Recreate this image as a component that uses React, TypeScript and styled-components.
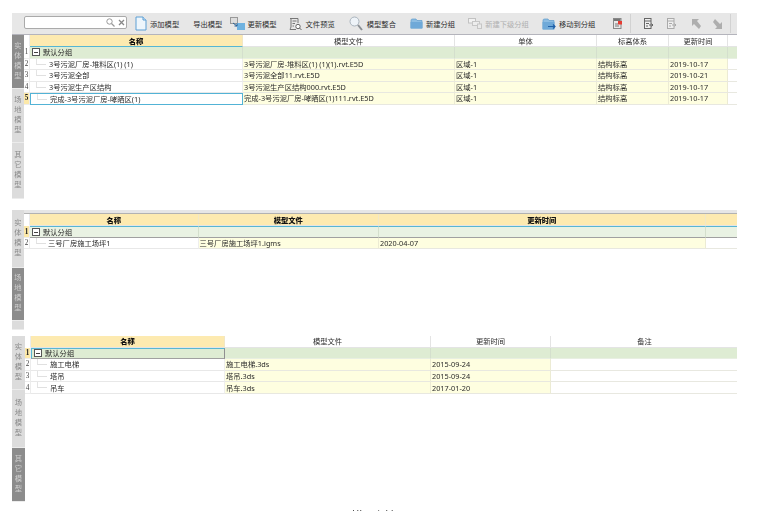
import React from "react";
import styled, { createGlobalStyle } from "styled-components";

const Global = createGlobalStyle`
  html, body { margin: 0; padding: 0; background: #fff; overflow: hidden; }
  #root { width: 784px; height: 511px; overflow: hidden; }
`;

const Page = styled.div`
  width: 784px;
  height: 511px;
  overflow: hidden;
  padding: 13px 47px 0 12px;
  box-sizing: border-box;
  font-family: "Noto Sans", "Noto Sans CJK SC", sans-serif;
  font-size: 7.3px;
  color: #2a2a2a;
  filter: blur(0.3px);
`;

const Toolbar = styled.div`
  height: 21px;
  box-sizing: content-box;
  border-bottom: 1px solid #b4b4bc;
  background: #e7e7e7;
  display: flex;
  align-items: center;
`;

const SearchBox = styled.div`
  margin: 0 0 2px 12px;
  width: 103px;
  height: 13px;
  box-sizing: border-box;
  background: #fff;
  border: 1px solid #aaa;
  border-radius: 2px;
  display: flex;
  align-items: center;
  justify-content: flex-end;
  gap: 3px;
  padding-right: 1px;
`;

const Tool = styled.div<{ $ml: number; $gap?: number; $off?: boolean }>`
  display: flex;
  align-items: center;
  flex: none;
  margin-left: ${(p) => p.$ml}px;
  gap: ${(p) => p.$gap ?? 3}px;
  color: ${(p) => (p.$off ? "#b0b0b0" : "#2e2e2e")};
  white-space: nowrap;
  line-height: 12px;
`;

const ToolSep = styled.div<{ $ml: number }>`
  flex: none;
  width: 1px;
  height: 19px;
  margin-left: ${(p) => p.$ml}px;
  background: #d2d2d2;
`;

const Panel = styled.div<{ $height: number; $mt: number }>`
  display: flex;
  height: ${(p) => p.$height}px;
  margin-top: ${(p) => p.$mt}px;
  overflow: hidden;
`;

const Rail = styled.div<{ $w: number }>`
  flex: none;
  width: ${(p) => p.$w}px;
  display: flex;
  flex-direction: column;
  background: #dcdcdc;
`;

const RailTab = styled.div<{ $h: number; $on?: boolean }>`
  flex: none;
  height: ${(p) => p.$h}px;
  box-sizing: border-box;
  display: flex;
  align-items: center;
  justify-content: center;
  background: ${(p) => (p.$on ? "#8c8c8c" : "#dcdcdc")};
  color: ${(p) => (p.$on ? "#cfcfcf" : "#8a8a8a")};
  border-bottom: 1px solid #ececec;
  writing-mode: vertical-rl;
  letter-spacing: 2.6px;
  line-height: 12px;
`;

const Body = styled.div`
  flex: 1;
  min-width: 0;
  display: flex;
  flex-direction: column;
`;

const TopStrip = styled.div`
  flex: none;
  height: 3px;
  background: #e6e6e6;
  border-bottom: 1px solid #b2b2b2;
`;

const Row = styled.div<{ $cols: string; $h: number }>`
  flex: none;
  display: grid;
  grid-template-columns: ${(p) => p.$cols};
  height: ${(p) => p.$h}px;
  > *:last-child {
    border-right: 0;
  }
`;

const NumCell = styled.div<{ $on?: boolean; $head?: boolean }>`
  box-sizing: border-box;
  display: flex;
  align-items: center;
  justify-content: center;
  font-size: 7.2px;
  font-family: "Liberation Serif", serif;
  font-weight: ${(p) => (p.$on ? 700 : 400)};
  color: ${(p) => (p.$on ? "#222" : "#444")};
  background: ${(p) => (p.$on ? "#fde9a9" : "#fff")};
  border-bottom: 1px solid ${(p) => (p.$head ? "#fff" : "#ececec")};
  border-right: 1px solid #ececec;
`;

const HeadCell = styled.div<{ $on?: boolean; $line?: boolean }>`
  box-sizing: border-box;
  display: flex;
  align-items: center;
  justify-content: center;
  background: ${(p) => (p.$on ? "#fdeab0" : "#fff")};
  border-right: 1px solid ${(p) => (p.$on ? "#f1e7c6" : "#e4e4e4")};
  border-bottom: ${(p) => (p.$line ? "1.5px solid #57b6d3" : "1px solid #e4e4e4")};
  font-weight: ${(p) => (p.$on ? 900 : 400)};
  color: ${(p) => (p.$on ? "#111" : "#2e2e2e")};
  white-space: nowrap;
`;

const GroupCell = styled.div<{ $tone: string; $first?: boolean; $sel?: string }>`
  box-sizing: border-box;
  display: flex;
  align-items: center;
  gap: 3px;
  padding-left: ${(p) => (p.$first ? 2 : 0)}px;
  background: ${(p) => p.$tone};
  white-space: nowrap;
  overflow: hidden;
  border-right: 1px solid ${(p) => (p.$sel === "cell" ? "#909090" : "#d4dfcd")};
  border-top: ${(p) => (p.$sel ? "1px solid #57b6d3" : "0")};
  border-bottom: ${(p) => (p.$sel ? "1px solid #a0a0a0" : "1px solid #e8efe2")};
  border-left: ${(p) => (p.$sel === "cell" ? "1px solid #57b6d3" : "0")};
`;

const Collapse = styled.span`
  flex: none;
  width: 8px;
  height: 8px;
  box-sizing: border-box;
  border: 1px solid #555;
  background: #fff;
  display: flex;
  align-items: center;
  justify-content: center;
  &::before {
    content: "";
    width: 4px;
    height: 1px;
    background: #444;
  }
`;

const NameCell = styled.div<{ $sel?: boolean; $pad: number }>`
  position: relative;
  box-sizing: border-box;
  display: flex;
  align-items: center;
  padding-left: ${(p) => p.$pad}px;
  white-space: nowrap;
  overflow: hidden;
  background: #fff;
  border: ${(p) => (p.$sel ? "1px solid #52b3d6" : "0")};
  border-bottom: 1px solid ${(p) => (p.$sel ? "#52b3d6" : "#e8e8e8")};
  border-right: 1px solid ${(p) => (p.$sel ? "#52b3d6" : "#eeeeee")};
  &::before {
    content: "";
    position: absolute;
    left: 6px;
    top: -1px;
    width: 9px;
    height: 6px;
    border-left: 1px solid #e4e4e4;
    border-bottom: 1px solid #e0e0e0;
  }
`;

const DataCell = styled.div<{ $plain?: boolean }>`
  box-sizing: border-box;
  display: flex;
  align-items: center;
  padding-left: 1px;
  white-space: nowrap;
  overflow: hidden;
  background: ${(p) => (p.$plain ? "#fff" : "#fefee0")};
  border-right: 1px solid #ecebd4;
  border-bottom: 1px solid #e8e8e0;
`;

const Caption = styled.div`
  margin: 6px 0 0 287px;
  font-family: "Noto Sans CJK SC", sans-serif;
  font-size: 13px;
  letter-spacing: 3.7px;
  line-height: 16px;
  color: #444;
  white-space: nowrap;
`;

const I = (p: { w: number; h: number; children: React.ReactNode }) => (
  <svg width={p.w} height={p.h} viewBox={`0 0 ${p.w} ${p.h}`} style={{ flex: "none", display: "block" }}>
    {p.children}
  </svg>
);

const DocIcon = () => (
  <I w={12} h={15}>
    <path d="M1 1H8L11 4V14H1Z" fill="#eef6fc" stroke="#5c9fd4" />
    <path d="M8 1V4H11" fill="#cfe4f5" stroke="#5c9fd4" />
  </I>
);
const UpdateIcon = () => (
  <I w={15} h={14}>
    <rect x="0.5" y="0.5" width="7" height="6" fill="#ddd" stroke="#999" />
    <rect x="7" y="6" width="8" height="7" fill="#6fb2e0" />
    <path d="M3 6L7 9M7 9V6.5M7 9H4.5" stroke="#245f96" fill="none" />
  </I>
);
const PreviewIcon = () => (
  <I w={13} h={14}>
    <path d="M1 1.5H9M2 1.5V10C2 11 1 11.5 1 12.5H7M9 1.5V6M3.5 4H7.5M3.5 6.5H6M3.5 9H5" stroke="#777" fill="none" />
    <circle cx="9" cy="9.5" r="2.2" fill="#fff" stroke="#666" />
    <path d="M10.5 11L12.5 13" stroke="#666" />
  </I>
);
const SearchIcon = () => (
  <I w={14} h={15}>
    <circle cx="5.5" cy="5.5" r="4.5" fill="#eef3f8" stroke="#aab4bd" />
    <path d="M9 9L13 14" stroke="#8a8f94" strokeWidth="2" />
  </I>
);
const FolderIcon = () => (
  <I w={13} h={11}>
    <path d="M1 2.5C1 1.5 1.5 1 2.5 1H6L7 2.5H12V10H1Z" fill="#8dbde2" stroke="#5f9bcb" strokeWidth="0.7" />
    <rect x="0.5" y="4" width="12" height="6.5" fill="#6fa9d8" />
  </I>
);
const SubGroupIcon = () => (
  <I w={14} h={11}>
    <rect x="0.5" y="0.5" width="7" height="4.5" fill="#f2f2f2" stroke="#c2c2c2" />
    <rect x="4.5" y="3.5" width="7" height="4" fill="#ededed" stroke="#c6c6c6" />
    <rect x="9.5" y="6" width="4" height="4.5" fill="#eaeaea" stroke="#c6c6c6" />
  </I>
);
const MoveIcon = () => (
  <I w={14} h={12}>
    <path d="M1 2.5C1 1.5 1.5 1 2.5 1H6L7 2.5H12V11H1Z" fill="#8dbde2" stroke="#5f9bcb" strokeWidth="0.7" />
    <rect x="0.5" y="4" width="12" height="7.5" fill="#6fa9d8" />
    <path d="M6 8.5H13M11 6.5L13 8.5L11 10.5" stroke="#1f5fa8" fill="none" strokeWidth="1.2" />
  </I>
);
const RedDocIcon = () => (
  <I w={9} h={11}>
    <rect x="0.5" y="0.5" width="7.5" height="10" fill="#e8e8e8" stroke="#888" />
    <rect x="1" y="1" width="6.5" height="2" fill="#777" />
    <rect x="5" y="3" width="4" height="3.5" fill="#e53b32" />
    <path d="M2 6H5M2 8H6" stroke="#777" />
  </I>
);
const SheetIcon = ({ c }: { c: string }) => (
  <I w={9} h={11}>
    <rect x="0.5" y="0.5" width="6.5" height="10" fill="#efefef" stroke={c} />
    <path d="M1 3H7M2 5.5H5M2 8H4" stroke={c} />
    <path d="M5 7H9M7.5 5.5L9 7L7.5 8.5" stroke={c} fill="none" />
  </I>
);
const ArrowIcon = ({ flip }: { flip?: boolean }) => (
  <I w={10} h={10}>
    <path
      d={flip ? "M2 0L7 5L9 3V10H2L4 8L0 3Z" : "M8 10L3 5L1 7V0H8L6 2L10 7Z"}
      fill="#aeaeae"
    />
  </I>
);
const Lens = () => (
  <I w={9} h={9}>
    <circle cx="3.5" cy="3.5" r="2.7" fill="none" stroke="#999" />
    <path d="M5.5 5.5L8.5 8.5" stroke="#999" strokeWidth="1.3" />
  </I>
);
const Cross = () => (
  <I w={7} h={7}>
    <path d="M1 1L6 6M6 1L1 6" stroke="#888" strokeWidth="1.3" />
  </I>
);

type PanelDef = {
  mt: number;
  height: number;
  rail: number;
  strip?: boolean;
  tabs: string[];
  tabHeights: number[];
  active: number;
  cols: string;
  heads: { t: string; on?: boolean; line?: boolean }[];
  rowH: number;
  headH: number;
  groupH: number;
  groupSel?: "row" | "cell";
  groupTone: string;
  numOn: number;
  pad: number;
  plainFrom: number;
  rows: string[][];
  selRow?: number;
};

const panels: PanelDef[] = [
  {
    mt: 0,
    height: 164,
    rail: 12,
    tabs: ["实体模型", "场地模型", "其它模型"],
    tabHeights: [54, 54, 56],
    active: 0,
    cols: "6px 213px 212px 142px 72px 59px 9px",
    heads: [
      { t: "名称", on: true, line: true },
      { t: "模型文件" },
      { t: "单体" },
      { t: "标高体系" },
      { t: "更新时间" },
      { t: "" },
    ],
    headH: 12,
    groupH: 11.5,
    rowH: 11.5,
    groupTone: "#deecd3",
    numOn: 5,
    pad: 19,
    plainFrom: 5,
    selRow: 3,
    rows: [
      ["3号污泥厂房-堆料区(1) (1)", "3号污泥厂房-堆料区(1) (1)(1).rvt.E5D", "区域-1", "结构标高", "2019-10-17", ""],
      ["3号污泥全部", "3号污泥全部11.rvt.E5D", "区域-1", "结构标高", "2019-10-21", ""],
      ["3号污泥生产区结构", "3号污泥生产区结构000.rvt.E5D", "区域-1", "结构标高", "2019-10-17", ""],
      ["完成-3号污泥厂房-哮晒区(1)", "完成-3号污泥厂房-哮晒区(1)111.rvt.E5D", "区域-1", "结构标高", "2019-10-17", ""],
    ],
  },
  {
    mt: 11,
    height: 120,
    rail: 12,
    strip: true,
    tabs: ["实体模型", "场地模型", ""],
    tabHeights: [58, 53, 9],
    active: 1,
    cols: "6px 168.5px 180.5px 326.5px 32px",
    heads: [
      { t: "名称", on: true },
      { t: "模型文件", on: true },
      { t: "更新时间", on: true },
      { t: "", on: true },
    ],
    headH: 12,
    groupH: 12,
    rowH: 11,
    groupSel: "row",
    groupTone: "#e9f2e3",
    numOn: 1,
    pad: 18,
    plainFrom: 3,
    rows: [["三号厂房施工场坪1", "三号厂房施工场坪1.igms", "2020-04-07", ""]],
  },
  {
    mt: 6,
    height: 166,
    rail: 13,
    tabs: ["实体模型", "场地模型", "其它模型"],
    tabHeights: [54, 58, 54],
    active: 2,
    cols: "6px 194px 206px 120px 187px",
    heads: [
      { t: "名称", on: true },
      { t: "模型文件" },
      { t: "更新时间" },
      { t: "备注" },
    ],
    headH: 11.5,
    groupH: 11.5,
    rowH: 11.7,
    groupSel: "cell",
    groupTone: "#deecd3",
    numOn: 1,
    pad: 19,
    plainFrom: 3,
    rows: [
      ["施工电梯", "施工电梯.3ds", "2015-09-24", ""],
      ["塔吊", "塔吊.3ds", "2015-09-24", ""],
      ["吊车", "吊车.3ds", "2017-01-20", ""],
    ],
  },
];

const GridPanel = ({ d }: { d: PanelDef }) => (
  <Panel $height={d.height} $mt={d.mt}>
    <Rail $w={d.rail}>
      {d.tabs.map((t, i) => (
        <RailTab key={i} $h={d.tabHeights[i]} $on={i === d.active}>
          {t}
        </RailTab>
      ))}
    </Rail>
    <Body>
      {d.strip && <TopStrip />}
      <Row $cols={d.cols} $h={d.headH}>
        <NumCell $head />
        {d.heads.map((h, i) => (
          <HeadCell key={i} $on={h.on} $line={h.line}>
            {h.t}
          </HeadCell>
        ))}
      </Row>
      <Row $cols={d.cols} $h={d.groupH}>
        <NumCell $on={d.numOn === 1}>1</NumCell>
        {d.heads.map((_, i) => (
          <GroupCell
            key={i}
            $tone={d.groupTone}
            $first={i === 0}
            $sel={d.groupSel === "row" ? "row" : d.groupSel === "cell" && i === 0 ? "cell" : undefined}
          >
            {i === 0 && (
              <>
                <Collapse />
                默认分组
              </>
            )}
          </GroupCell>
        ))}
      </Row>
      {d.rows.map((r, ri) => (
        <Row key={ri} $cols={d.cols} $h={d.rowH}>
          <NumCell $on={d.numOn === ri + 2}>{ri + 2}</NumCell>
          {r.map((c, ci) =>
            ci === 0 ? (
              <NameCell key={ci} $pad={d.pad} $sel={d.selRow === ri}>
                {c}
              </NameCell>
            ) : (
              <DataCell key={ci} $plain={ci >= d.plainFrom}>
                {c}
              </DataCell>
            )
          )}
        </Row>
      ))}
    </Body>
  </Panel>
);

export default function App() {
  return (
    <Page>
      <Global />
      <Toolbar>
        <SearchBox>
          <Lens />
          <Cross />
        </SearchBox>
        <Tool $ml={8}>
          <DocIcon />
          添加模型
        </Tool>
        <Tool $ml={14}>导出模型</Tool>
        <Tool $ml={8} $gap={2}>
          <UpdateIcon />
          更新模型
        </Tool>
        <Tool $ml={12} $gap={4}>
          <PreviewIcon />
          文件预览
        </Tool>
        <Tool $ml={14} $gap={4}>
          <SearchIcon />
          模型整合
        </Tool>
        <Tool $ml={14}>
          <FolderIcon />
          新建分组
        </Tool>
        <Tool $ml={13} $off>
          <SubGroupIcon />
          新建下级分组
        </Tool>
        <Tool $ml={13}>
          <MoveIcon />
          移动到分组
        </Tool>
        <Tool $ml={18}>
          <RedDocIcon />
        </Tool>
        <ToolSep $ml={8} />
        <Tool $ml={13}>
          <SheetIcon c="#666" />
        </Tool>
        <Tool $ml={14}>
          <SheetIcon c="#aaa" />
        </Tool>
        <Tool $ml={15}>
          <ArrowIcon />
        </Tool>
        <Tool $ml={12}>
          <ArrowIcon flip />
        </Tool>
        <ToolSep $ml={7} />
      </Toolbar>
      {panels.map((d, i) => (
        <GridPanel key={i} d={d} />
      ))}
      <Caption>图 15 模型管理</Caption>
    </Page>
  );
}
